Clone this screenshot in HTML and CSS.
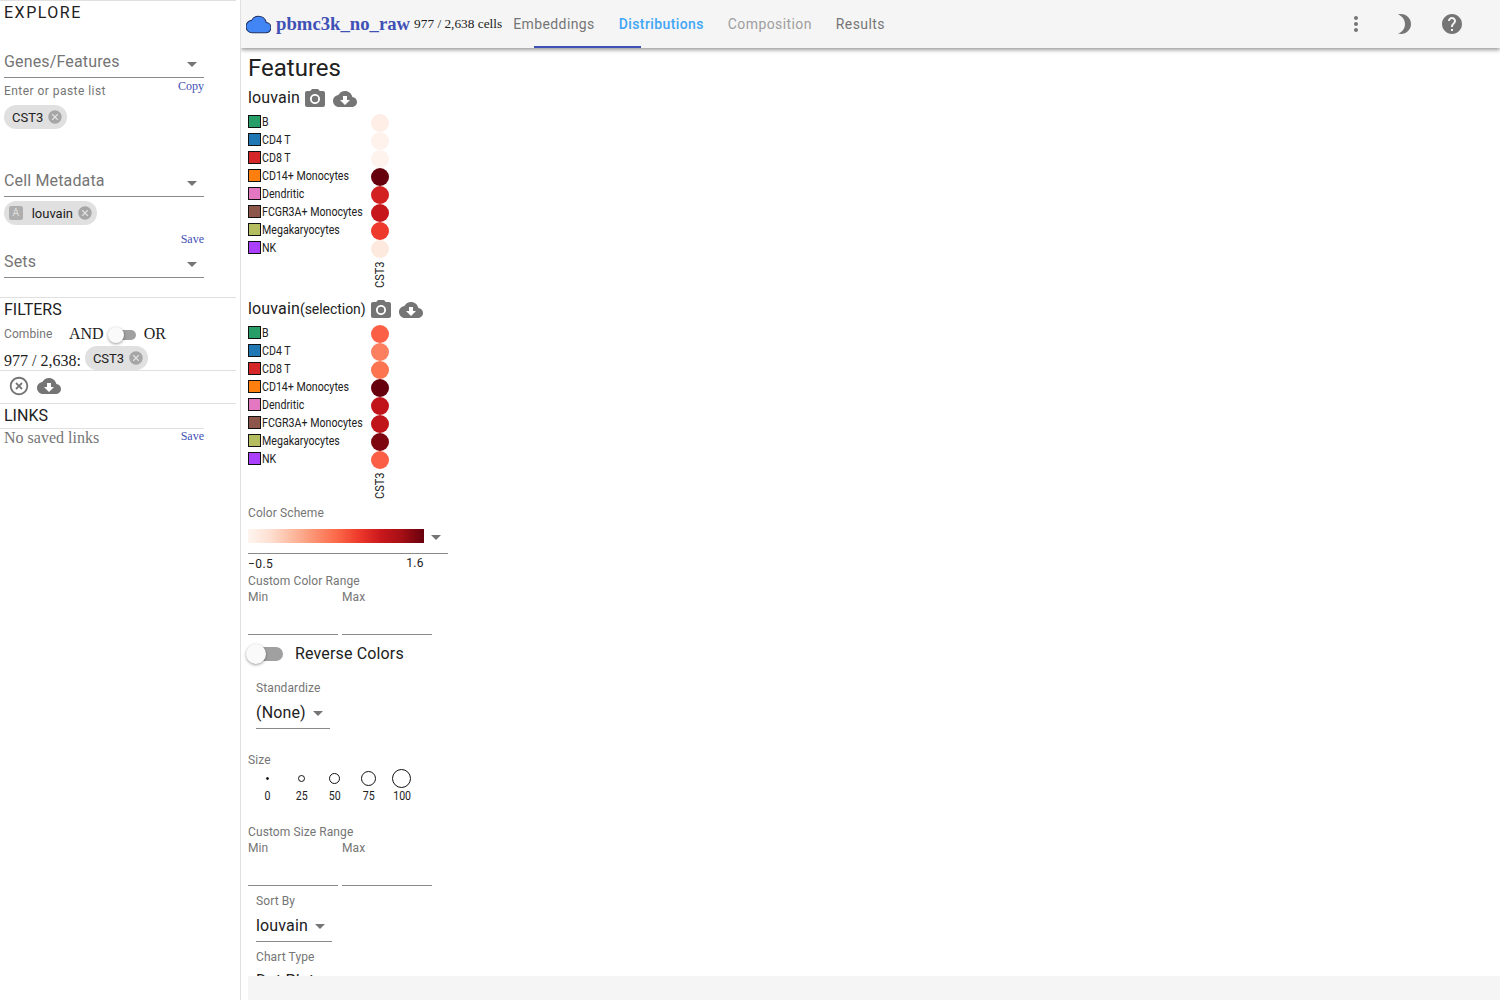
FILE: index.html
```html
<!DOCTYPE html>
<html lang="en">
<head>
  <meta charset="UTF-8" />
  <title>Cirrocumulus</title>
  <link rel="stylesheet" href="styles.css">
</head>
<body>
  <svg class="defs" width="0" height="0">
    <symbol id="i-cloud-down" viewBox="0 0 24 24"><path d="M19.35 10.04C18.67 6.59 15.64 4 12 4 9.11 4 6.6 5.64 5.35 8.04 2.34 8.36 0 10.91 0 14c0 3.31 2.69 6 6 6h13c2.76 0 5-2.24 5-5 0-2.64-2.05-4.78-4.65-4.96zM17 13l-5 5-5-5h3V9h4v4h3z"/></symbol>
    <symbol id="i-camera" viewBox="0 0 24 24"><circle cx="12" cy="12" r="3.2"/><path d="M9 2L7.17 4H4c-1.1 0-2 .9-2 2v12c0 1.1.9 2 2 2h16c1.1 0 2-.9 2-2V6c0-1.1-.9-2-2-2h-3.17L15 2H9zm3 15c-2.76 0-5-2.24-5-5s2.24-5 5-5 5 2.24 5 5-2.24 5-5 5z"/></symbol>
    <symbol id="i-cancel" viewBox="0 0 24 24"><path d="M12 2C6.47 2 2 6.47 2 12s4.47 10 10 10 10-4.47 10-10S17.53 2 12 2zm5 13.59L15.59 17 12 13.41 8.41 17 7 15.59 10.59 12 7 8.41 8.41 7 12 10.59 15.59 7 17 8.41 13.41 12 17 15.59z"/></symbol>
    <symbol id="i-off" viewBox="0 0 24 24"><path d="M14.59 8L12 10.59 9.41 8 8 9.41 10.59 12 8 14.59 9.41 16 12 13.41 14.59 16 16 14.59 13.41 12 16 9.41 14.59 8zM12 2C6.47 2 2 6.47 2 12s4.47 10 10 10 10-4.47 10-10S17.53 2 12 2zm0 18c-4.41 0-8-3.59-8-8s3.59-8 8-8 8 3.59 8 8-3.59 8-8 8z"/></symbol>
  </svg>

  <div class="app">
    <!-- Side bar -->
    <aside class="sidebar">
      <div class="explore-title">EXPLORE</div>

      <div class="field field-genes"><span>Genes/Features</span><i class="caret"></i></div>
      <div class="hint-row">
        <span class="hint">Enter or paste list</span>
        <a class="link">Copy</a>
      </div>
      <div class="chip chip-genes">CST3<svg class="chip-x"><use href="#i-cancel"/></svg></div>

      <div class="field field-meta"><span>Cell Metadata</span><i class="caret"></i></div>
      <div class="chip chip-meta"><b class="chip-avatar">A</b>louvain<svg class="chip-x"><use href="#i-cancel"/></svg></div>
      <div class="save-row"><a class="link">Save</a></div>
      <div class="field field-sets"><span>Sets</span><i class="caret"></i></div>

      <h4 class="side-heading heading-filters">FILTERS</h4>
      <div class="combine-row">
        <span class="combine-label">Combine</span>
        <span class="serif-text">AND</span>
        <span class="switch switch-small"><i class="thumb"></i></span>
        <span class="serif-text">OR</span>
      </div>
      <div class="count-row">
        <span class="serif-text">977 / 2,638:</span>
        <div class="chip">CST3<svg class="chip-x"><use href="#i-cancel"/></svg></div>
      </div>
      <div class="filter-icons">
        <svg class="icon-off"><use href="#i-off"/></svg>
        <svg class="icon-cloud"><use href="#i-cloud-down"/></svg>
      </div>
      <h4 class="side-heading heading-links">LINKS</h4>
      <div class="links-row">
        <span class="serif-text muted">No saved links</span>
        <a class="link">Save</a>
      </div>
    </aside>

    <div class="main">
      <!-- Top bar -->
      <header class="toolbar">
        <svg class="logo" viewBox="0 0 24 24"><path d="M19.35 10.04C18.67 6.59 15.64 4 12 4 9.11 4 6.6 5.64 5.35 8.04 2.34 8.36 0 10.91 0 14c0 3.31 2.69 6 6 6h13c2.76 0 5-2.24 5-5 0-2.64-2.05-4.78-4.65-4.96z"/></svg>
        <span class="dataset-name">pbmc3k_no_raw</span>
        <span class="dataset-count">977 / 2,638 cells</span>
        <nav class="tabs">
          <span class="tab">Embeddings</span>
          <span class="tab active">Distributions</span>
          <span class="tab disabled">Composition</span>
          <span class="tab">Results</span>
          <i class="tab-indicator"></i>
        </nav>
        <div class="toolbar-icons">
          <svg class="tool-icon" viewBox="0 0 24 24"><path d="M12 8c1.1 0 2-.9 2-2s-.9-2-2-2-2 .9-2 2 .9 2 2 2zm0 2c-1.1 0-2 .9-2 2s.9 2 2 2 2-.9 2-2-.9-2-2-2zm0 6c-1.1 0-2 .9-2 2s.9 2 2 2 2-.9 2-2-.9-2-2-2z"/></svg>
          <svg class="tool-icon" viewBox="0 0 24 24"><path d="M9 2c-1.05 0-2.05.16-3 .46 4.06 1.27 7 5.06 7 9.54 0 4.48-2.94 8.27-7 9.54.95.3 1.95.46 3 .46 5.52 0 10-4.48 10-10S14.52 2 9 2z"/></svg>
          <svg class="tool-icon" viewBox="0 0 24 24"><path d="M12 2C6.48 2 2 6.48 2 12s4.48 10 10 10 10-4.48 10-10S17.52 2 12 2zm1 17h-2v-2h2v2zm2.07-7.75l-.9.92C13.45 12.9 13 13.5 13 15h-2v-.5c0-1.1.45-2.1 1.17-2.83l1.24-1.26c.37-.36.59-.86.59-1.41 0-1.1-.9-2-2-2s-2 .9-2 2H8c0-2.21 1.79-4 4-4s4 1.79 4 4c0 .88-.36 1.68-.93 2.25z"/></svg>
        </div>
      </header>

      <section class="content">
        <h3 class="page-title">Features</h3>

        <div class="chart-title">
          <span>louvain</span>
          <svg class="icon-camera"><use href="#i-camera"/></svg>
          <svg class="icon-cloud"><use href="#i-cloud-down"/></svg>
        </div>
        <div class="dotplot">
          <ul class="legend">
            <li><i class="swatch" style="background:#279e68"></i><span>B</span></li>
            <li><i class="swatch" style="background:#1f77b4"></i><span>CD4 T</span></li>
            <li><i class="swatch" style="background:#d62728"></i><span>CD8 T</span></li>
            <li><i class="swatch" style="background:#ff7f0e"></i><span>CD14+ Monocytes</span></li>
            <li><i class="swatch" style="background:#e377c2"></i><span>Dendritic</span></li>
            <li><i class="swatch" style="background:#8c564b"></i><span>FCGR3A+ Monocytes</span></li>
            <li><i class="swatch" style="background:#b5bd61"></i><span>Megakaryocytes</span></li>
            <li><i class="swatch" style="background:#aa40fc"></i><span>NK</span></li>
          </ul>
          <div class="dots">
            <i class="dot" style="background:#feeee6"></i>
            <i class="dot" style="background:#fff2ec"></i>
            <i class="dot" style="background:#fff3ed"></i>
            <i class="dot" style="background:#67000d"></i>
            <i class="dot" style="background:#d32020"></i>
            <i class="dot" style="background:#c5171c"></i>
            <i class="dot" style="background:#ee3a2c"></i>
            <i class="dot" style="background:#fee9df"></i>
            <span class="dots-label">CST3</span>
          </div>
        </div>

        <div class="chart-title chart-title-second">
          <span>louvain<small>(selection)</small></span>
          <svg class="icon-camera"><use href="#i-camera"/></svg>
          <svg class="icon-cloud"><use href="#i-cloud-down"/></svg>
        </div>
        <div class="dotplot">
          <ul class="legend">
            <li><i class="swatch" style="background:#279e68"></i><span>B</span></li>
            <li><i class="swatch" style="background:#1f77b4"></i><span>CD4 T</span></li>
            <li><i class="swatch" style="background:#d62728"></i><span>CD8 T</span></li>
            <li><i class="swatch" style="background:#ff7f0e"></i><span>CD14+ Monocytes</span></li>
            <li><i class="swatch" style="background:#e377c2"></i><span>Dendritic</span></li>
            <li><i class="swatch" style="background:#8c564b"></i><span>FCGR3A+ Monocytes</span></li>
            <li><i class="swatch" style="background:#b5bd61"></i><span>Megakaryocytes</span></li>
            <li><i class="swatch" style="background:#aa40fc"></i><span>NK</span></li>
          </ul>
          <div class="dots">
            <i class="dot" style="background:#fb5f45"></i>
            <i class="dot" style="background:#fc7f5f"></i>
            <i class="dot" style="background:#fc7450"></i>
            <i class="dot" style="background:#67000d"></i>
            <i class="dot" style="background:#c0141a"></i>
            <i class="dot" style="background:#bf151b"></i>
            <i class="dot" style="background:#7e0610"></i>
            <i class="dot" style="background:#fb5f45"></i>
            <span class="dots-label">CST3</span>
          </div>
        </div>

        <div class="small-label label-scheme">Color Scheme</div>
        <div class="scheme-select">
          <div class="scheme-ramp"></div>
          <i class="caret"></i>
        </div>
        <div class="scheme-range"><span class="range-min">−0.5</span><span class="range-max">1.6</span></div>
        <div class="small-label label-custom">Custom Color Range</div>
        <div class="min-max">
          <div class="min-max-col"><span class="small-label">Min</span><div class="blank-input"></div></div>
          <div class="min-max-col"><span class="small-label">Max</span><div class="blank-input"></div></div>
        </div>

        <div class="reverse-row">
          <span class="switch"><i class="thumb"></i></span>
          <span>Reverse Colors</span>
        </div>

        <div class="small-label label-indent label-standardize">Standardize</div>
        <div class="select select-none"><span>(None)</span><i class="caret"></i></div>

        <div class="small-label label-size">Size</div>
        <div class="size-legend">
          <div class="size-item"><div class="size-ring"><i class="ring ring-0"></i></div><span>0</span></div>
          <div class="size-item"><div class="size-ring"><i class="ring ring-25"></i></div><span>25</span></div>
          <div class="size-item"><div class="size-ring"><i class="ring ring-50"></i></div><span>50</span></div>
          <div class="size-item"><div class="size-ring"><i class="ring ring-75"></i></div><span>75</span></div>
          <div class="size-item"><div class="size-ring"><i class="ring ring-100"></i></div><span>100</span></div>
        </div>

        <div class="small-label label-custom-size">Custom Size Range</div>
        <div class="min-max">
          <div class="min-max-col"><span class="small-label">Min</span><div class="blank-input"></div></div>
          <div class="min-max-col"><span class="small-label">Max</span><div class="blank-input"></div></div>
        </div>

        <div class="small-label label-indent label-sort">Sort By</div>
        <div class="select select-sort"><span>louvain</span><i class="caret"></i></div>
        <div class="small-label label-indent label-chart">Chart Type</div>
        <div class="select select-chart"><span>Dot Plot</span></div>
      </section>
      <div class="bottom-bar"></div>
    </div>
  </div>
</body>
</html>
```

FILE: styles.css
```css
* { box-sizing: border-box; }
html, body { height: 100%; }
body { margin: 0; overflow: hidden; background: #fff; color: #212121; font-family: Roboto, "Liberation Sans", sans-serif; font-size: 16px; }
.defs { position: absolute; }
.app { display: flex; height: 1000px; overflow: hidden; }
svg { display: block; fill: currentColor; }
ul { list-style: none; margin: 0; padding: 0; }
h3, h4 { margin: 0; font-weight: 400; }
i { display: block; }

/* Side bar */
.sidebar { flex: none; width: 241px; height: 100%; border-right: 1px solid #e0e0e0; padding-right: 4px; }
.explore-title { height: 23px; line-height: 24px; padding-left: 4px; border-top: 1px solid #e0e0e0; letter-spacing: 1.5px; }
.field { display: flex; justify-content: space-between; align-items: center; width: 200px; height: 29px; margin-left: 4px; padding: 1px 7px 3px 0; line-height: 24px; letter-spacing: 0.15px; color: #757575; border-bottom: 1px solid #8a8a8a; }
.field-genes { margin-top: 26px; }
.field-meta { margin-top: 39px; }
.field-sets { margin-top: 2px; }
.field .caret { margin-top: 4px; }
.caret { flex: none; width: 0; height: 0; border-left: 5.5px solid transparent; border-right: 5.5px solid transparent; border-top: 5.5px solid #757575; }
.hint-row { display: flex; justify-content: space-between; align-items: flex-start; width: 200px; height: 21px; margin-left: 4px; }
.hint { margin-top: 5px; font-size: 12px; line-height: 16px; letter-spacing: 0.45px; color: #757575; }
.link { font-family: "Liberation Serif", serif; font-size: 12px; line-height: 16px; color: #3f51b5; }
.chip { display: inline-flex; align-items: center; height: 24px; padding: 0 4px 0 8px; border-radius: 12px; background: #e0e0e0; font-size: 13px; color: #212121; }
.chip-genes { display: flex; width: 63px; margin: 6px 0 0 4px; }
.chip-meta { display: flex; width: 93px; margin: 4px 0 0 4px; padding-left: 5px; }
.chip-avatar { display: block; width: 14px; height: 14px; margin-right: 9px; border-radius: 2px; background: #aeaeae; color: #e0e0e0; font-size: 10px; font-weight: 400; line-height: 14px; text-align: center; }
.chip-x { flex: none; width: 16px; height: 16px; margin-left: 4px; color: #a6a6a6; }
.save-row { display: flex; justify-content: flex-end; width: 200px; height: 16px; margin: 6px 0 0 4px; }
.side-heading { height: 23px; line-height: 22px; padding-left: 4px; border-top: 1px solid #e0e0e0; }
.heading-filters { margin-top: 19px; line-height: 24px; }
.combine-row { display: flex; align-items: center; height: 20px; margin-top: 4px; padding-left: 4px; }
.combine-label { width: 65px; font-size: 12px; letter-spacing: 0.1px; color: #757575; }
.serif-text { font-family: "Liberation Serif", serif; font-size: 16px; }
.muted { color: #757575; }
.switch { position: relative; flex: none; display: block; width: 35px; height: 14px; border-radius: 7px; background: #a0a0a0; }
.thumb { position: absolute; left: -2px; top: -3px; width: 20px; height: 20px; border-radius: 50%; background: #fafafa; box-shadow: 0 1px 3px rgba(0,0,0,0.4); }
.switch-small { width: 27px; height: 10px; margin: 2px 8px 0 5px; }
.switch-small .thumb { left: -1px; top: -3px; width: 16px; height: 16px; }
.count-row { display: flex; align-items: center; gap: 4px; height: 25px; margin-top: 2px; padding-left: 4px; border-bottom: 1px solid #e0e0e0; }
.count-row .serif-text { margin-top: 5px; }
.filter-icons { display: flex; align-items: center; gap: 7px; height: 32px; padding: 0 0 2px 8px; color: #757575; }
.icon-off { width: 22px; height: 22px; }
.icon-cloud { width: 24px; height: 24px; color: #757575; }
.heading-links { height: 25px; padding-top: 1px; }
.links-row { display: flex; justify-content: space-between; width: 204px; height: 20px; padding-left: 4px; border-top: 1px solid #e0e0e0; }
.links-row .link { margin-top: -1px; }

/* Top bar */
.main { position: relative; flex: 1; min-width: 0; height: 100%; overflow: hidden; }
.toolbar { position: relative; z-index: 2; display: flex; align-items: center; height: 48px; padding-left: 5px; background: #f5f5f5; box-shadow: 0 2px 4px rgba(0,0,0,0.4); }
.logo { flex: none; width: 25px; height: 25px; fill: #4285f4; stroke: #1c2f63; stroke-width: 1; }
.dataset-name { margin-left: 5px; font-family: "Liberation Serif", serif; font-size: 18.72px; font-weight: 700; color: #3f51b5; }
.dataset-count { margin-left: 4px; font-family: "Liberation Serif", serif; font-size: 13.33px; color: #212121; }
.tabs { position: relative; display: flex; gap: 24px; margin-left: 11px; height: 48px; align-items: center; }
.tab { font-size: 14px; letter-spacing: 0.4px; color: #757575; }
.tab.active { font-weight: 500; color: #42a5f5; }
.tab.disabled { color: #9e9e9e; }
.tab-indicator { position: absolute; left: 21px; bottom: 0; width: 107px; height: 2px; background: #3f51b5; }
.toolbar-icons { display: flex; gap: 24px; margin-left: auto; padding-right: 36px; color: #757575; }
.tool-icon { width: 24px; height: 24px; }

/* Main content */
.content { padding: 4px 0 0 7px; }
.page-title { font-size: 24px; line-height: 32px; }
.chart-title { display: flex; align-items: center; height: 24px; margin-top: 1px; line-height: 24px; letter-spacing: 0.15px; color: #212121; }
.chart-title span { margin-top: 2px; }
.chart-title small { font-size: 14px; letter-spacing: -0.05px; }
.chart-title svg { margin-top: 4px; }
.chart-title .icon-camera { width: 24px; height: 24px; margin-left: 3px; color: #757575; }
.chart-title .icon-cloud { margin-left: 6px; }
.chart-title-second { margin-top: 7px; }
.dotplot { display: flex; margin-top: 4px; }
.legend { width: 122px; font-size: 12px; }
.legend li { display: flex; align-items: center; height: 18px; color: #212121; white-space: nowrap; }
.legend span { transform: scaleX(0.886); transform-origin: left center; }
.swatch { flex: none; width: 13px; height: 13px; margin: -2px 1px 0 0; border: 1.5px solid #111; }
.dots { display: flex; flex-direction: column; align-items: center; width: 19px; }
.dot { flex: none; width: 18px; height: 18px; margin-top: 0; border-radius: 50%; }
.dots .dot:first-child { margin-top: 1px; }
.dots-label { margin-top: 7px; height: 24px; writing-mode: vertical-rl; transform: rotate(180deg) scaleY(0.92); font-size: 12px; line-height: 12px; text-align: right; }
.small-label { display: block; font-size: 12px; line-height: 16px; letter-spacing: 0.1px; color: #757575; }
.label-scheme { margin-top: 5px; }
.scheme-select { display: flex; align-items: center; width: 200px; height: 25px; margin-top: 8px; padding-bottom: 10px; border-bottom: 1px solid #8a8a8a; }
.scheme-ramp { width: 176px; height: 14px; background: linear-gradient(to right, #fff5f0, #fee0d2, #fcbba1, #fc9272, #fb6a4a, #ef3b2c, #cb181d, #a50f15, #67000d); }
.scheme-select .caret { margin: 3px 0 0 7px; }
.scheme-range { display: flex; justify-content: space-between; width: 176px; height: 16px; margin-top: 2px; font-size: 12px; line-height: 16px; letter-spacing: 0.4px; }
.range-max { margin-top: -1px; }
.label-custom { margin-top: 1px; }
.min-max { display: flex; gap: 4px; }
.min-max-col { width: 90px; }
.blank-input { height: 30px; border-bottom: 1px solid #8a8a8a; }
.reverse-row { display: flex; align-items: center; gap: 12px; height: 24px; margin-top: 7px; line-height: 22px; letter-spacing: 0.15px; }
.label-indent { margin-left: 8px; }
.label-standardize { margin-top: 14px; }
.select { display: flex; align-items: center; gap: 7px; height: 29px; margin: 4px 0 0 8px; padding: 1px 0 3px; line-height: 24px; letter-spacing: 0.15px; border-bottom: 1px solid #8a8a8a; }
.select .caret { margin-top: 1px; }
.select-none { width: 74px; }
.select-sort { width: 76px; }
.select-chart { margin-top: 2px; border-bottom: 0; }
.label-size { margin-top: 23px; }
.size-legend { display: flex; margin: 1px 0 0 3px; }
.size-item { width: 33.5px; text-align: center; font-size: 12px; line-height: 16px; color: #212121; }
.size-item span { display: inline-block; transform: scaleX(0.88); }
.size-ring { display: flex; align-items: center; justify-content: center; height: 18px; margin-bottom: 1px; }
.ring { flex: none; border: 1px solid #111; border-radius: 50%; }
.ring-0 { width: 3px; height: 3px; background: #111; }
.ring-25 { width: 7px; height: 7px; }
.ring-50 { width: 11px; height: 11px; }
.ring-75 { width: 15px; height: 15px; }
.ring-100 { width: 19px; height: 19px; }
.label-custom-size { margin-top: 20px; }
.label-sort { margin-top: 7px; }
.label-chart { margin-top: 7px; }
.bottom-bar { position: absolute; left: 7px; right: 0; top: 976px; height: 24px; background: #f5f5f5; }
```
